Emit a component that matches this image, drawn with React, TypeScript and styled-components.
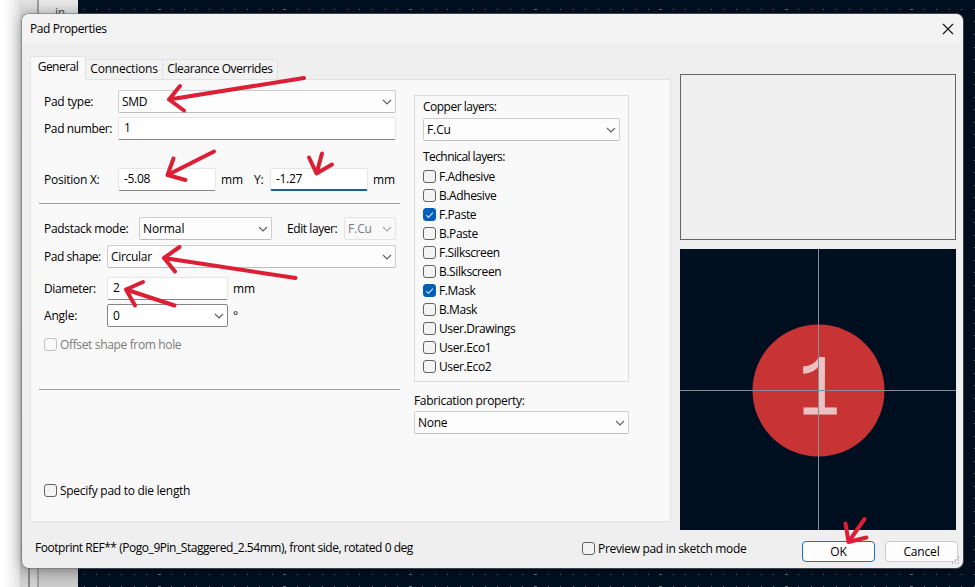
import React from 'react';
import styled, { createGlobalStyle, css } from 'styled-components';

const Global = createGlobalStyle`
  * { box-sizing: border-box; }
  html, body { margin: 0; padding: 0; overflow: hidden; }
  body { font-family: "Open Sans", "Noto Sans", sans-serif; font-size: 12px; line-height: 16px; color: #000; letter-spacing: -0.3px; }
`;

const Desktop = styled.div`
  position: relative;
  width: 975px;
  height: 587px;
  overflow: hidden;
  padding: 14px 12px 19px 22px;
`;

const Backdrop = styled.div`
  position: absolute;
  inset: 0;
  display: flex;
`;

const Margin = styled.div`
  width: 20px;
  background: linear-gradient(90deg, #fff 0, #fdfdfd 20%, #efefef 70%, #e0e0e0 100%);
`;

const Gutter = styled.div`
  display: flex;
  width: 19px;
  background: #dcdcdc;
  background: linear-gradient(180deg, #e2e2e2 0, #d4d4d4 14px, #c4c4c4 568px, #d2d2d2);
  justify-content: flex-end;
`;

const GutterLine = styled.div<{ $from: number; $gap: number; $color: string }>`
  width: 2px;
  margin: ${(p) => p.$from}px ${(p) => p.$gap}px 0 0;
  background: ${(p) => p.$color};
`;

const Ruler = styled.div`
  width: 39px;
  padding: 5px 0 0 16px;
  color: #444;
  background: linear-gradient(180deg, #e8e8e8 0, #dadada 14px, #bcbcbc 568px, #cdcdcd);
`;

const Board = styled.svg`
  width: 897px;
  height: 587px;
  background: #000f1f;
`;

const Dialog = styled.main`
  position: relative;
  width: 941px;
  height: 554px;
  display: flex;
  flex-direction: column;
  border-radius: 7px;
  background: #efefef;
  box-shadow: 0 0 0 1px rgba(110, 114, 118, 0.55), 0 2px 14px rgba(0, 0, 0, 0.35);
`;

const TitleBar = styled.header`
  display: flex;
  justify-content: space-between;
  align-items: center;
  height: 30px;
  padding: 0 9px 1px 8px;
  border-radius: 7px 7px 0 0;
  background: #f3f3f3;
`;

const Body = styled.div`
  display: flex;
  gap: 9px;
  height: 486px;
  padding: 12px 7px 0 8px;
`;

const Notebook = styled.section`
  display: flex;
  flex-direction: column;
  width: 641px;
`;

const TabList = styled.div`
  display: flex;
  align-items: flex-end;
  height: 23px;
`;

const Tab = styled.div<{ $w: number; $ls: number; $active?: boolean }>`
  width: ${(p) => p.$w}px;
  height: 20px;
  padding-top: 1px;
  letter-spacing: ${(p) => p.$ls}px;
  text-align: center;
  white-space: nowrap;
  border: 1px solid #e2e2e2;
  border-left-width: 0;
  border-bottom: 0;
  background: #f2f2f2;
  ${(p) =>
    p.$active &&
    css`
      height: 24px;
      margin-bottom: -1px;
      padding-top: 2px;
      z-index: 1;
      border-left-width: 1px;
      background: #f9f9f9;
    `}
`;

const Page = styled.div`
  display: flex;
  gap: 14px;
  height: 443px;
  padding: 10px 0 0 8px;
  border: 1px solid #e2e2e2;
  background: #f9f9f9;
`;

const FormColumn = styled.div`
  display: flex;
  flex-direction: column;
  width: 361px;
`;

const Row = styled.div<{ $top?: number }>`
  display: flex;
  align-items: center;
  height: 23px;
  margin-top: ${(p) => p.$top ?? 0}px;
  padding-left: 5px;
`;

const Text = styled.span<{ $w?: number; $indent?: number; $ls?: number; $dim?: boolean }>`
  display: inline-block;
  flex: none;
  width: ${(p) => (p.$w ? `${p.$w}px` : 'auto')};
  padding-left: ${(p) => p.$indent ?? 0}px;
  letter-spacing: ${(p) => p.$ls ?? -0.3}px;
  color: ${(p) => (p.$dim ? '#7b7b7b' : '#000')};
  white-space: nowrap;
`;

const Heading = styled(Text)<{ $top: number; $gap: number }>`
  margin: ${(p) => p.$top}px 0 ${(p) => p.$gap}px;
`;

const Field = styled.div<{ $w: number; $focus?: boolean }>`
  flex: none;
  width: ${(p) => p.$w}px;
  height: 23px;
  padding: 2px 5px;
  border: 1px solid #e6e6e6;
  border-bottom: ${(p) => (p.$focus ? '2px solid #1b5f9e' : '1px solid #868686')};
  border-radius: 2px;
  background: #fff;
`;

const Select = styled.div<{ $w: number; $kind?: 'disabled' | 'editable' }>`
  flex: none;
  display: flex;
  align-items: center;
  justify-content: space-between;
  width: ${(p) => p.$w}px;
  height: 23px;
  padding: 0 3px 0 3px;
  border: 1px solid #cdcdcd;
  border-bottom-color: #bdbdbd;
  border-radius: 2px;
  background: #fdfdfd;
  ${(p) => p.$kind === 'disabled' && css`border-color: #e3e3e3; background: #f9f9f9;`}
  ${(p) => p.$kind === 'editable' && css`border-color: #868686; padding-left: 5px; background: #fff;`}
`;

const Separator = styled.hr<{ $top: number }>`
  width: 361px;
  height: 1px;
  margin: ${(p) => p.$top}px 0 0;
  border: 0;
  background: #a0a0a0;
`;

const CheckLine = styled.label`
  display: flex;
  align-items: center;
  gap: 3px;
  height: 19px;
`;

const Box = styled.span<{ $on?: boolean; $dim?: boolean }>`
  display: flex;
  align-items: center;
  justify-content: center;
  width: 13px;
  height: 13px;
  border: 1px solid ${(p) => (p.$on ? '#005fb8' : p.$dim ? '#c3c3c3' : '#626262')};
  border-radius: 3px;
  background: ${(p) => (p.$on ? '#005fb8' : p.$dim ? '#fafafa' : '#f4f4f4')};
`;

const LayerColumn = styled.div`
  display: flex;
  flex-direction: column;
  width: 215px;
  padding-top: 5px;
`;

const LayerGroup = styled.div`
  display: flex;
  flex-direction: column;
  height: 287px;
  padding: 0 8px;
  border: 1px solid #dcdcdc;
`;

const PreviewColumn = styled.aside`
  display: flex;
  flex-direction: column;
  gap: 9px;
  width: 276px;
  padding-top: 18px;
`;

const InfoBox = styled.div`
  height: 166px;
  border: 1px solid #646464;
`;

const PadCanvas = styled.svg`
  display: block;
  width: 276px;
  height: 281px;
  background: #000f1f;
`;

const Footer = styled.footer`
  display: flex;
  align-items: center;
  height: 38px;
  padding: 0 5px 0 13px;
`;

const Status = styled.div`
  width: 547px;
  height: 19px;
`;

const SketchToggle = styled.div`
  width: 220px;
  height: 20px;
`;

const Button = styled.button<{ $primary?: boolean }>`
  width: 73px;
  height: 21px;
  margin: 5px 10px 0 0;
  padding: 0;
  font: inherit;
  line-height: 18px;
  letter-spacing: -0.15px;
  color: #000;
  border: 1px solid ${(p) => (p.$primary ? '#1a6fbe' : '#cbcbcb')};
  border-radius: 4px;
  background: #fdfdfd;
  &:last-of-type { margin-right: 0; }
`;

const Grip = styled.svg`
  position: absolute;
  right: 3px;
  bottom: 3px;
`;

const Annotations = styled.svg`
  position: absolute;
  inset: 0;
  pointer-events: none;
`;

const Chevron = ({ dim }: { dim?: boolean }) => (
  <svg width="10" height="6" viewBox="0 0 10 6" fill="none">
    <path d="M1 1l4 4 4-4" stroke={dim ? '#ababab' : '#606060'} strokeWidth="1.1" />
  </svg>
);

const Check = ({ label, on, dim, ls }: { label: string; on?: boolean; dim?: boolean; ls?: number }) => (
  <CheckLine>
    <Box $on={on} $dim={dim}>
      {on && (
        <svg width="9" height="8" viewBox="0 0 9 8" fill="none">
          <path d="M1.2 4.2l2.2 2.2L8 1.6" stroke="#cfe2f5" strokeWidth="1.1" />
        </svg>
      )}
    </Box>
    <Text $dim={dim} $ls={ls}>{label}</Text>
  </CheckLine>
);

const layers: { name: string; on?: boolean }[] = [
  { name: 'F.Adhesive' },
  { name: 'B.Adhesive' },
  { name: 'F.Paste', on: true },
  { name: 'B.Paste' },
  { name: 'F.Silkscreen' },
  { name: 'B.Silkscreen' },
  { name: 'F.Mask', on: true },
  { name: 'B.Mask' },
  { name: 'User.Drawings' },
  { name: 'User.Eco1' },
  { name: 'User.Eco2' },
];

const PITCH = 12.54;
const gridDots: { x: number; y: number; w: number }[] = [];
for (let r = 0; r < 47; r++) {
  for (let c = -6; c < 66; c++) {
    const major = c % 10 === 0;
    gridDots.push({ x: Math.floor(159.3 + c * PITCH) - 78 - (major ? 1 : 0), y: Math.floor(9.4 + r * 12.55), w: major ? 3 : 1 });
  }
}

const arrows = [
  'M304 78L169 99.5M180 86L169 99.5L184 110.5',
  'M214 151.5L167.5 175M173.5 158.5L167.5 175L185.5 180',
  'M332 164.5L316.5 173.500M309 157.5L316.5 173.500L322 153.500',
  'M295.500 278L164 258M179.500 247L164 258L175 271.500',
  'M174.500 305.500L126 289.500M143 282L126 289.500L135 305.500',
  'M864.500 519L848.500 542M845.500 523.500L848.500 542L866.500 537.500',
];

export default function App() {
  return (
    <Desktop>
      <Global />
      <Backdrop>
        <Margin />
        <Gutter>
          <GutterLine $from={568} $gap={7} $color="#858585" />
          <GutterLine $from={0} $gap={0} $color="#9c9c9c" />
        </Gutter>
        <Ruler>in</Ruler>
        <Board viewBox="0 0 897 587" shapeRendering="crispEdges">
          {gridDots.map((d, i) => (
            <rect key={i} x={d.x} y={d.y} width={d.w} height="1" fill="#68737c" />
          ))}
        </Board>
      </Backdrop>
      <Dialog>
        <TitleBar>
          <Text $ls={-0.42}>Pad Properties</Text>
          <svg width="12" height="12" viewBox="0 0 12 12">
            <path d="M1 1l10 10M11 1L1 11" stroke="#1a1a1a" strokeWidth="1.2" />
          </svg>
        </TitleBar>
        <Body>
          <Notebook>
            <TabList>
              <Tab $w={56} $ls={-0.5} $active>General</Tab>
              <Tab $w={77} $ls={-0.2}>Connections</Tab>
              <Tab $w={115} $ls={-0.42}>Clearance Overrides</Tab>
            </TabList>
            <Page>
              <FormColumn>
                <Row>
                  <Text $w={74} $ls={-0.3}>Pad type:</Text>
                  <Select $w={278}><Text>SMD</Text><Chevron /></Select>
                </Row>
                <Row $top={4}>
                  <Text $w={74} $ls={-0.38}>Pad number:</Text>
                  <Field $w={278}>1</Field>
                </Row>
                <Row $top={28}>
                  <Text $w={74} $ls={-0.25}>Position X:</Text>
                  <Field $w={98}>-5.08</Field>
                  <Text $w={38} $indent={5} $ls={-0.1}>mm</Text>
                  <Text $w={16}>Y:</Text>
                  <Field $w={98} $focus>-1.27</Field>
                  <Text $indent={5} $ls={-0.1}>mm</Text>
                </Row>
                <Separator $top={12} />
                <Row $top={13}>
                  <Text $w={95}>Padstack mode:</Text>
                  <Select $w={133}><Text $ls={-0.1}>Normal</Text><Chevron /></Select>
                  <Text $w={72} $indent={15} $ls={-0.42}>Edit layer:</Text>
                  <Select $w={52} $kind="disabled"><Text $dim $ls={-0.1}>F.Cu</Text><Chevron dim /></Select>
                </Row>
                <Row $top={5}>
                  <Text $w={63} $ls={-0.45}>Pad shape:</Text>
                  <Select $w={289}><Text>Circular</Text><Chevron /></Select>
                </Row>
                <Row $top={9}>
                  <Text $w={63} $ls={-0.4}>Diameter:</Text>
                  <Field $w={121}>2</Field>
                  <Text $indent={5} $ls={-0.1}>mm</Text>
                </Row>
                <Row $top={4}>
                  <Text $w={63} $ls={-0.2}>Angle:</Text>
                  <Select $w={121} $kind="editable"><Text>0</Text><Chevron /></Select>
                  <Text $indent={5}>°</Text>
                </Row>
                <Row $top={6}>
                  <Check label="Offset shape from hole" dim ls={-0.35} />
                </Row>
                <Separator $top={33} />
                <Row $top={89}>
                  <Check label="Specify pad to die length" ls={-0.28} />
                </Row>
              </FormColumn>
              <LayerColumn>
                <LayerGroup>
                  <Heading $top={3} $gap={3} $ls={-0.5}>Copper layers:</Heading>
                  <Select $w={197}><Text $ls={-0.1}>F.Cu</Text><Chevron /></Select>
                  <Heading $top={8} $gap={2} $ls={-0.58}>Technical layers:</Heading>
                  {layers.map((l) => <Check key={l.name} label={l.name} on={l.on} ls={-0.4} />)}
                </LayerGroup>
                <Heading $top={11} $gap={2} $ls={-0.33}>Fabrication property:</Heading>
                <Select $w={215}><Text>None</Text><Chevron /></Select>
              </LayerColumn>
            </Page>
          </Notebook>
          <PreviewColumn>
            <InfoBox />
            <PadCanvas viewBox="0 0 276 281">
              <circle cx="138.500" cy="141.500" r="66" fill="#c83434" />
              <text transform="translate(139 165) scale(0.8 1)" fontSize="85" textAnchor="middle" fontFamily="Liberation Mono" fill="#edc0c2" stroke="#edc0c2" strokeWidth="1">1</text>
              <path d="M138.500 0V281M0 141.500H276" stroke="#868c92" strokeWidth="1" />
            </PadCanvas>
          </PreviewColumn>
        </Body>
        <Footer>
          <Status><Text $ls={-0.46}>Footprint REF** (Pogo_9Pin_Staggered_2.54mm), front side, rotated 0 deg</Text></Status>
          <SketchToggle><Check label="Preview pad in sketch mode" ls={-0.32} /></SketchToggle>
          <Button $primary>OK</Button>
          <Button>Cancel</Button>
        </Footer>
        <Grip width="9" height="9" viewBox="0 0 9 9" fill="#b5b5b5">
          <path d="M7 0h1v2h-1zM4 3h1v2h-1zM7 3h1v2h-1zM1 6h1v2h-1zM4 6h1v2h-1zM7 6h1v2h-1z" />
        </Grip>
      </Dialog>
      <Annotations width="975" height="587" viewBox="0 0 975 587" fill="none" stroke="#dc1f35" strokeWidth="4" strokeLinecap="round" strokeLinejoin="round">
        {arrows.map((d) => <path key={d} d={d} />)}
      </Annotations>
    </Desktop>
  );
}
